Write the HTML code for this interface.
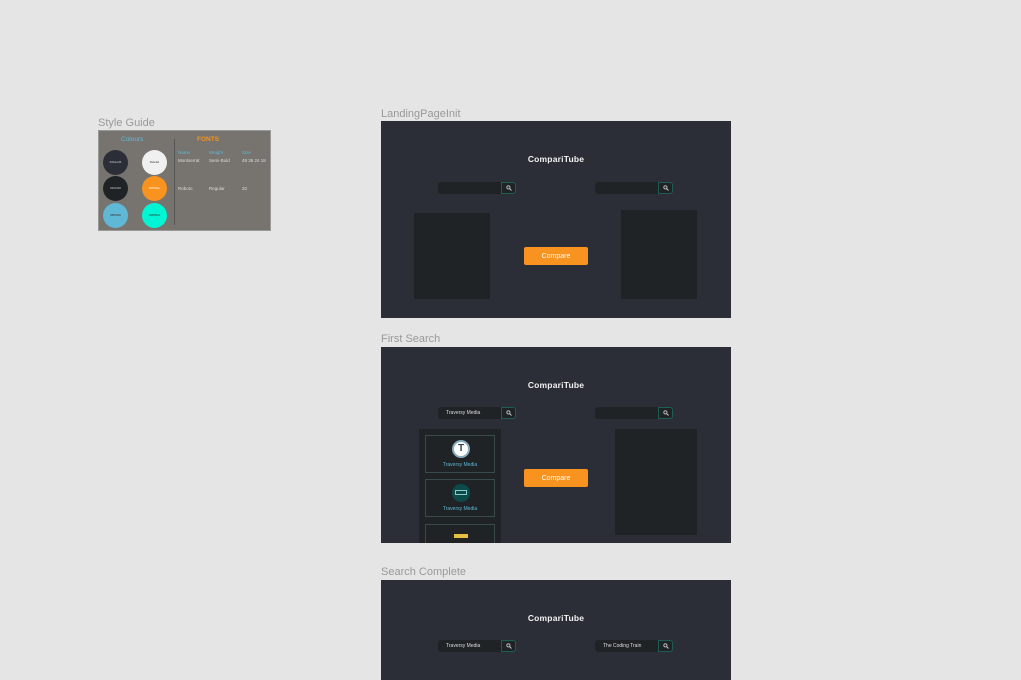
<!DOCTYPE html>
<html><head><meta charset="utf-8"><style>
*{margin:0;padding:0;box-sizing:border-box}
body{width:1021px;height:667px;background:#e5e5e5;position:relative;overflow:hidden;font-family:"Liberation Sans",sans-serif}
.abs{position:absolute}
.lbl{position:absolute;font-size:11px;color:#999}
.frame{position:absolute;left:381px;width:350px;background:#2b2e36;overflow:hidden}
.title{position:absolute;left:0;width:350px;text-align:center;color:#f2f2f2;font-size:8.5px;font-weight:bold;letter-spacing:0.2px}
.search{position:absolute;width:78px;height:12px}
.search .in{position:absolute;left:0;top:0;width:64px;height:12px;background:#1f2326;border-radius:3px 0 0 3px;color:#ddd;font-size:5px;line-height:12px;padding-left:8px}
.search .bt{position:absolute;left:63px;top:0;width:15px;height:12px;border:1px solid #1e5c55;border-radius:0 3px 3px 0;background:#1f2326}
.search .bt svg{position:absolute;left:4px;top:2px}
.panel{position:absolute;background:#1f2326}
.cmp{position:absolute;width:64px;height:18px;background:#f7931e;border-radius:2px;color:#fff;font-size:7px;text-align:center;line-height:19px}
.card{position:absolute;left:6px;width:70px;height:38px;border:1px solid #3a4a4c}
.card .nm{position:absolute;bottom:4px;width:100%;text-align:center;font-size:5px;color:#5fb8d6}
.circ{position:absolute;width:25px;height:25px;border-radius:50%;font-size:3px;text-align:center;line-height:25px}
.sg{position:absolute;font-size:4.5px;color:#ddd}
</style></head><body>
<div class="lbl" style="left:98px;top:117px">Style Guide</div>
<div class="abs" style="left:98px;top:130px;width:173px;height:101px;background:#77746f;border:1px solid #999">
 <div class="abs" style="left:22px;top:5px;font-size:6.5px;color:#5fb8d6">Colours</div>
 <div class="abs" style="left:75px;top:8px;width:1px;height:86px;background:#555"></div>
 <div class="abs" style="left:98px;top:5px;font-size:6.5px;color:#f7931e;font-weight:bold">FONTS</div>
 <div class="circ" style="left:4px;top:19px;background:#2b2e36;color:#ccc">#2b2e36</div>
 <div class="circ" style="left:43px;top:19px;background:#f0f0f0;color:#333">#efefef</div>
 <div class="circ" style="left:4px;top:45px;background:#1f2326;color:#ccc">#1f2326</div>
 <div class="circ" style="left:43px;top:45px;background:#f7931e;color:#fff">#f7931e</div>
 <div class="circ" style="left:4px;top:72px;background:#5fb8d6;color:#333">#5fb8d6</div>
 <div class="circ" style="left:43px;top:72px;background:#00f5d4;color:#333">#00f5d4</div>
 <div class="sg" style="left:79px;top:19px;color:#5fb8d6">Name</div>
 <div class="sg" style="left:110px;top:19px;color:#5fb8d6">Weight</div>
 <div class="sg" style="left:143px;top:19px;color:#5fb8d6">Size</div>
 <div class="sg" style="left:79px;top:27px">Montserrat</div>
 <div class="sg" style="left:110px;top:27px">Semi-Bold</div>
 <div class="sg" style="left:143px;top:27px">48 36 24 18</div>
 <div class="sg" style="left:79px;top:55px">Roboto</div>
 <div class="sg" style="left:110px;top:55px">Regular</div>
 <div class="sg" style="left:143px;top:55px">20</div>
</div>

<div class="lbl" style="left:381px;top:108px">LandingPageInit</div>
<div class="frame" style="top:121px;height:197px">
 <div class="title" style="top:33px">CompariTube</div>
 <div class="search" style="left:57px;top:61px"><div class="in"></div><div class="bt"><svg width="6" height="6" viewBox="0 0 6 6"><circle cx="2.4" cy="2.4" r="1.6" fill="none" stroke="#ccc" stroke-width="0.8"/><path d="M3.6 3.6L5.5 5.5" stroke="#ccc" stroke-width="0.9"/></svg></div></div>
 <div class="search" style="left:214px;top:61px"><div class="in"></div><div class="bt"><svg width="6" height="6" viewBox="0 0 6 6"><circle cx="2.4" cy="2.4" r="1.6" fill="none" stroke="#ccc" stroke-width="0.8"/><path d="M3.6 3.6L5.5 5.5" stroke="#ccc" stroke-width="0.9"/></svg></div></div>
 <div class="panel" style="left:33px;top:92px;width:76px;height:86px"></div>
 <div class="panel" style="left:240px;top:89px;width:76px;height:89px"></div>
 <div class="cmp" style="left:143px;top:126px">Compare</div>
</div>

<div class="lbl" style="left:381px;top:333px">First Search</div>
<div class="frame" style="top:347px;height:196px">
 <div class="title" style="top:33px">CompariTube</div>
 <div class="search" style="left:57px;top:60px"><div class="in">Traversy Media</div><div class="bt"><svg width="6" height="6" viewBox="0 0 6 6"><circle cx="2.4" cy="2.4" r="1.6" fill="none" stroke="#ccc" stroke-width="0.8"/><path d="M3.6 3.6L5.5 5.5" stroke="#ccc" stroke-width="0.9"/></svg></div></div>
 <div class="search" style="left:214px;top:60px"><div class="in"></div><div class="bt"><svg width="6" height="6" viewBox="0 0 6 6"><circle cx="2.4" cy="2.4" r="1.6" fill="none" stroke="#ccc" stroke-width="0.8"/><path d="M3.6 3.6L5.5 5.5" stroke="#ccc" stroke-width="0.9"/></svg></div></div>
 <div class="panel" style="left:38px;top:82px;width:82px;height:114px">
  <div class="card" style="top:6px"><div class="abs" style="left:26px;top:4px;width:18px;height:18px;border-radius:50%;background:#fff;border:2px solid #8ab;color:#345;font-size:10px;text-align:center;line-height:14px;font-weight:bold">T</div><div class="nm">Traversy Media</div></div>
  <div class="card" style="top:50px"><div class="abs" style="left:26px;top:4px;width:18px;height:18px;border-radius:50%;background:#0f4a4a"><div class="abs" style="left:3px;top:6px;width:12px;height:5px;border:1px solid #8cc"></div></div><div class="nm">Traversy Media</div></div>
  <div class="card" style="top:95px;height:30px"><div class="abs" style="left:26px;top:4px;width:18px;height:18px;border-radius:50%;background:#222"><div class="abs" style="left:2px;top:5px;width:14px;height:4px;background:#e8c040"></div></div></div>
 </div>
 <div class="panel" style="left:234px;top:82px;width:82px;height:106px"></div>
 <div class="cmp" style="left:143px;top:122px">Compare</div>
</div>

<div class="lbl" style="left:381px;top:566px">Search Complete</div>
<div class="frame" style="top:580px;height:100px">
 <div class="title" style="top:33px">CompariTube</div>
 <div class="search" style="left:57px;top:60px"><div class="in">Traversy Media</div><div class="bt"><svg width="6" height="6" viewBox="0 0 6 6"><circle cx="2.4" cy="2.4" r="1.6" fill="none" stroke="#ccc" stroke-width="0.8"/><path d="M3.6 3.6L5.5 5.5" stroke="#ccc" stroke-width="0.9"/></svg></div></div>
 <div class="search" style="left:214px;top:60px"><div class="in">The Coding Train</div><div class="bt"><svg width="6" height="6" viewBox="0 0 6 6"><circle cx="2.4" cy="2.4" r="1.6" fill="none" stroke="#ccc" stroke-width="0.8"/><path d="M3.6 3.6L5.5 5.5" stroke="#ccc" stroke-width="0.9"/></svg></div></div>
</div>
</body></html>
